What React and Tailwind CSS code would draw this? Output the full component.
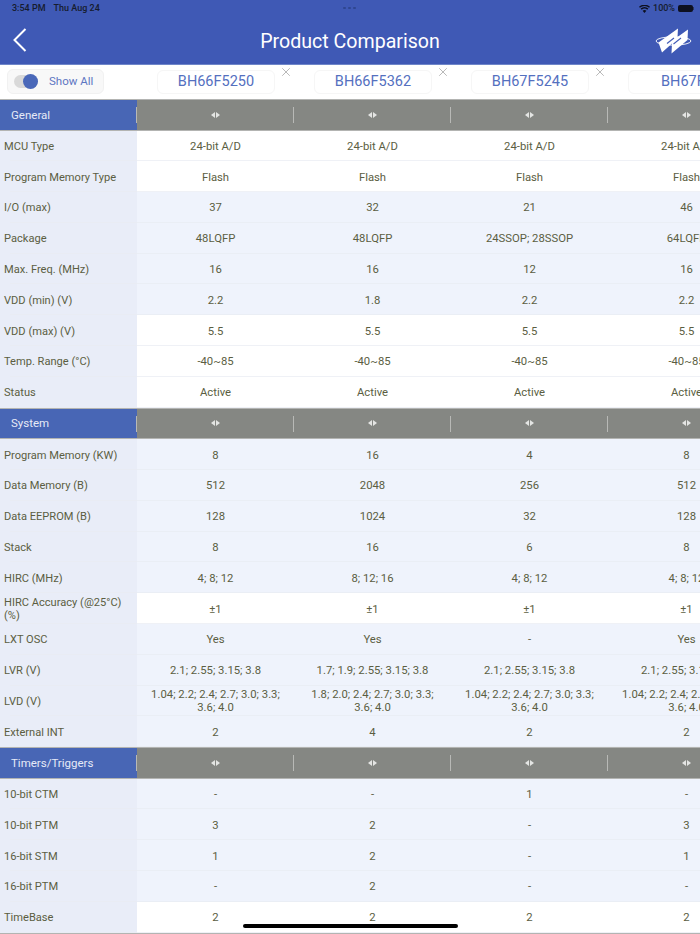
import { X } from "lucide-react";

const products = ["BH66F5250", "BH66F5362", "BH67F5245", "BH67F5"];

const sections = [
  {
    title: "General",
    rows: [
      ["MCU Type", ["24-bit A/D", "24-bit A/D", "24-bit A/D", "24-bit A/D"], true],
      ["Program Memory Type", ["Flash", "Flash", "Flash", "Flash"], true],
      ["I/O (max)", ["37", "32", "21", "46"]],
      ["Package", ["48LQFP", "48LQFP", "24SSOP; 28SSOP", "64LQFP"]],
      ["Max. Freq. (MHz)", ["16", "16", "12", "16"]],
      ["VDD (min) (V)", ["2.2", "1.8", "2.2", "2.2"]],
      ["VDD (max) (V)", ["5.5", "5.5", "5.5", "5.5"], true],
      ["Temp. Range (°C)", ["-40~85", "-40~85", "-40~85", "-40~85"], true],
      ["Status", ["Active", "Active", "Active", "Active"], true],
    ],
  },
  {
    title: "System",
    rows: [
      ["Program Memory (KW)", ["8", "16", "4", "8"]],
      ["Data Memory (B)", ["512", "2048", "256", "512"]],
      ["Data EEPROM (B)", ["128", "1024", "32", "128"]],
      ["Stack", ["8", "16", "6", "8"]],
      ["HIRC (MHz)", ["4; 8; 12", "8; 12; 16", "4; 8; 12", "4; 8; 12"]],
      ["HIRC Accuracy (@25°C) (%)", ["±1", "±1", "±1", "±1"], true],
      ["LXT OSC", ["Yes", "Yes", "-", "Yes"]],
      ["LVR (V)", ["2.1; 2.55; 3.15; 3.8", "1.7; 1.9; 2.55; 3.15; 3.8", "2.1; 2.55; 3.15; 3.8", "2.1; 2.55; 3.15; 3.8"]],
      ["LVD (V)", ["1.04; 2.2; 2.4; 2.7; 3.0; 3.3; 3.6; 4.0", "1.8; 2.0; 2.4; 2.7; 3.0; 3.3; 3.6; 4.0", "1.04; 2.2; 2.4; 2.7; 3.0; 3.3; 3.6; 4.0", "1.04; 2.2; 2.4; 2.7; 3.0; 3.3; 3.6; 4.0"]],
      ["External INT", ["2", "4", "2", "2"]],
    ],
  },
  {
    title: "Timers/Triggers",
    rows: [
      ["10-bit CTM", ["-", "-", "1", "-"]],
      ["10-bit PTM", ["3", "2", "-", "3"]],
      ["16-bit STM", ["1", "2", "-", "1"]],
      ["16-bit PTM", ["-", "2", "-", "-"]],
      ["TimeBase", ["2", "2", "2", "2"], true],
    ],
  },
];

const Logo = () => (
  <svg width="38" height="26" viewBox="0 0 38 26" fill="none">
    <ellipse cx="18.5" cy="13" rx="17.5" ry="4.2" stroke="white" strokeWidth="0.9" />
    <path d="M23 0.5 L22.5 9 L33 1.5 L32.5 12 L16.5 25.5 L17 15.5 L7 24.5 L3.5 14.5 Z" fill="white" />
    <path d="M12 15.5 L19 10" stroke="#3f59b5" strokeWidth="1.1" />
    <path d="M18.5 16 L26 10" stroke="#3f59b5" strokeWidth="1.1" />
  </svg>
);

const StatusBar = () => (
  <div className="relative flex h-[16px] items-center justify-between pl-[12px] pr-[6px] pt-[1px] text-[9px] font-medium text-[#161c2e]">
    <div className="flex gap-[8px]">
      <span>3:54 PM</span>
      <span>Thu Aug 24</span>
    </div>
    <div className="absolute left-[343px] top-[7px] flex gap-[2px]">
      <span className="h-[2px] w-[3px] rounded-full bg-[#2f4690]" />
      <span className="h-[2px] w-[3px] rounded-full bg-[#2f4690]" />
      <span className="h-[2px] w-[3px] rounded-full bg-[#2f4690]" />
    </div>
    <div className="flex items-center gap-[3px]">
      <svg width="11" height="8" viewBox="0 0 11 8" fill="#0d1020">
        <path d="M5.5 8 L3.6 5.8 A3 3 0 0 1 7.4 5.8 Z" />
        <path d="M2.7 4.8 L1.6 3.6 A5.8 5.8 0 0 1 9.4 3.6 L8.3 4.8 A4.2 4.2 0 0 0 2.7 4.8 Z" />
        <path d="M0.9 2.8 L0 1.8 A8 8 0 0 1 11 1.8 L10.1 2.8 A6.6 6.6 0 0 0 0.9 2.8 Z" />
      </svg>
      <span>100%</span>
      <div className="flex items-center">
        <div className="h-[7px] w-[15px] rounded-[2px] bg-[#0d1020]" />
        <div className="h-[3px] w-[1px] bg-[#2a3560]" />
      </div>
    </div>
  </div>
);

const NavBar = () => (
  <div className="relative flex h-[48px] items-center justify-center pt-[4px]">
    <svg className="absolute left-[12px] top-[11px]" width="16" height="26" viewBox="0 0 16 26" fill="none">
      <path d="M13.5 2 L2.5 13 L13.5 24" stroke="white" strokeWidth="2" />
    </svg>
    <h1 className="text-[19.6px] font-normal leading-none text-white">Product Comparison</h1>
    <div className="absolute left-[655px] top-[12px]">
      <Logo />
    </div>
  </div>
);

const Toolbar = () => (
  <div className="flex h-[34px] bg-white">
    <div className="w-[157px] shrink-0 pl-[7px] pt-[4px]">
      <div className="flex h-[25px] w-[97px] items-center rounded-[6px] border border-[#f1f1f1] bg-[#f8f8f8] pl-[6px]">
        <div className="relative h-[13px] w-[24px] rounded-full bg-[#d9d9d9]">
          <div className="absolute right-0 top-[-1px] h-[15px] w-[15px] rounded-full bg-[#4a68b9]" />
        </div>
        <span className="ml-[11px] text-[11.5px] text-[#5d76c2]">Show All</span>
      </div>
    </div>
    {products.map((p, i) => (
      <div key={p} className="relative w-[157px] shrink-0 pt-[5px]">
        <div className="flex h-[24px] w-[118px] items-center justify-center whitespace-nowrap rounded-[6px] border border-[#f6f6f6] text-[14.5px] text-[#5470bf]">
          {p}
        </div>
        {i < 3 && <X className="absolute left-[122px] top-0 text-[#b4b4b4]" size={14} strokeWidth={1.6} />}
      </div>
    ))}
  </div>
);

const SectionHeader = ({ title }) => (
  <div className="flex h-[31.5px] border-y border-y-[#b3b4b2] bg-[#858783]">
    <div className="flex w-[137px] shrink-0 items-center bg-[#4866b5] pl-[11px] pt-px text-[11.5px] text-[#e6eaf7]">
      {title}
    </div>
    {products.map((p) => (
      <div key={p} className="relative flex w-[157px] shrink-0 items-center justify-center">
        <div className="absolute left-[-1px] top-[7px] h-[16px] w-px bg-[#b8b9b6]" />
        <svg width="9" height="6" viewBox="0 0 9 6" fill="#e4e5e3">
          <path d="M4 0 L4 6 L0 3 Z" />
          <path d="M5 0 L5 6 L9 3 Z" />
        </svg>
      </div>
    ))}
  </div>
);

const Row = ({ label, values, white }) => (
  <div className={`relative flex h-[30.8px] ${white ? "bg-white" : "bg-[#eff3fc]"}`}>
    <div className="flex w-[137px] shrink-0 items-center bg-[#e9edf8] pl-[4px] pr-[2px] pt-px text-[11.1px] leading-[13px] text-[#5b5e42]">
      {label}
    </div>
    {values.map((v, i) => (
      <div
        key={i}
        className="flex w-[157px] shrink-0 items-center justify-center pt-px text-center text-[11.3px] leading-[13px] text-[#5b5e42]"
      >
        <span className="block w-[140px] shrink-0">{v}</span>
      </div>
    ))}
    <div className="absolute bottom-0 left-[10px] right-0 h-px bg-[#e8ebf2]/70" />
  </div>
);

export default function App() {
  return (
    <div
      className="relative h-[934px] w-[700px] overflow-hidden bg-white"
      style={{ fontFamily: "Roboto, 'Noto Sans', sans-serif" }}
    >
      <div className="h-[65px] border-b border-b-[#6f86c9] bg-[#3f59b5]">
        <StatusBar />
        <NavBar />
      </div>
      <Toolbar />
      {sections.map((s) => (
        <div key={s.title}>
          <SectionHeader title={s.title} />
          {s.rows.map((r) => (
            <Row key={r[0]} label={r[0]} values={r[1]} white={r[2]} />
          ))}
        </div>
      ))}
      <div className="h-px bg-[#b3b4b2]" />
      <div className="absolute bottom-[6px] left-[243px] h-[4px] w-[215px] rounded-full bg-black" />
    </div>
  );
}
